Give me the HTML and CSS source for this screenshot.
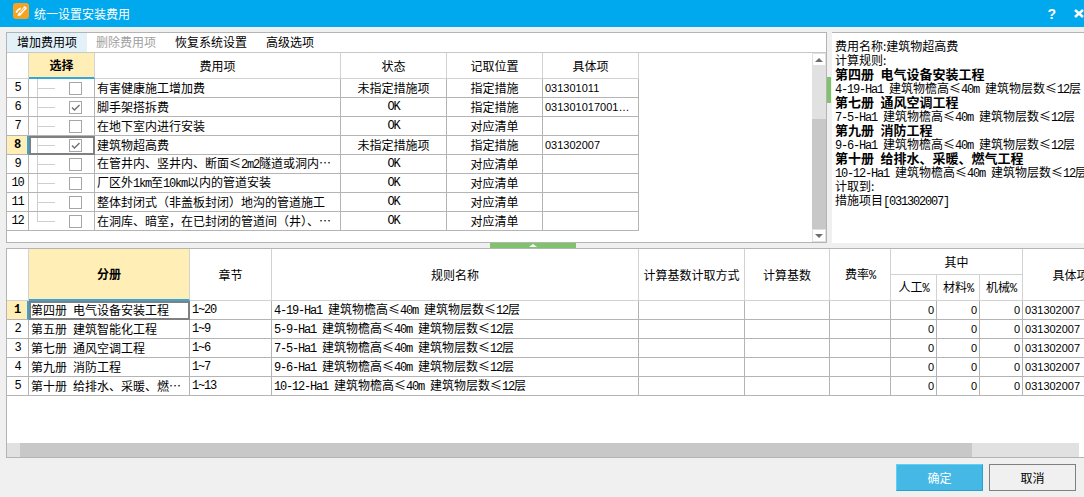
FILE: index.html
```html
<!DOCTYPE html>
<html lang="zh-CN">
<head>
  <meta charset="UTF-8">
  <title>统一设置安装费用</title>
  <link rel="stylesheet" href="styles.css">
</head>
<body>

<div class="titlebar">
  <svg class="logo" width="16" height="16" viewBox="0 0 16 16">
    <rect width="16" height="16" rx="3" fill="#f6a321"/>
    <path d="M2.5 9.5 Q4 5.5 8 4.5 L7.5 6.5 Q5 7 4 10 Z" fill="#fff"/>
    <path d="M5 11 L11.5 3 L14 5 L7.5 12.5 L4.5 13 Z" fill="#fff"/>
    <path d="M7 10 L11.5 5" stroke="#f6a321" stroke-width="1"/>
  </svg>
  <span class="title">统一设置安装费用</span>
  <span class="win-btn help">?</span>
  <svg class="win-close" width="10" height="9" viewBox="0 0 10 9"><path d="M1 1 L9 8 M9 1 L1 8" stroke="#fff" stroke-width="2.4"/></svg>
</div>

<div class="top">
  <div class="left-pane">
    <div class="toolbar">
      <span class="tool active">增加费用项</span>
      <span class="tool disabled">删除费用项</span>
      <span class="tool">恢复系统设置</span>
      <span class="tool">高级选项</span>
    </div>
    <div class="grid-area">
      <table class="grid fee-grid">
        <colgroup>
          <col class="w22"><col class="w66"><col class="w246"><col class="w106"><col class="w96"><col class="w96">
        </colgroup>
        <thead>
          <tr>
            <th></th>
            <th class="cur-col">选择</th>
            <th>费用项</th>
            <th>状态</th>
            <th>记取位置</th>
            <th>具体项</th>
          </tr>
        </thead>
        <tbody>
          <tr>
            <td class="rh">5</td>
            <td class="sel"><div class="sel-inner"><span class="tree"></span><span class="check"></span></div></td>
            <td>有害健康施工增加费</td>
            <td class="c">未指定措施项</td>
            <td class="c">指定措施</td>
            <td class="code">031301011</td>
          </tr>
          <tr>
            <td class="rh">6</td>
            <td class="sel"><div class="sel-inner"><span class="tree"></span><span class="check on"><svg width="11" height="11" viewBox="0 0 11 11"><path d="M2 5.5 L4.5 8 L9.5 3" fill="none" stroke="#6f6f7a" stroke-width="1.4"/></svg></span></div></td>
            <td>脚手架搭拆费</td>
            <td class="c m">OK</td>
            <td class="c">指定措施</td>
            <td class="code">031301017001…</td>
          </tr>
          <tr>
            <td class="rh">7</td>
            <td class="sel"><div class="sel-inner"><span class="tree"></span><span class="check"></span></div></td>
            <td>在地下室内进行安装</td>
            <td class="c m">OK</td>
            <td class="c">对应清单</td>
            <td class="code"></td>
          </tr>
          <tr>
            <td class="rh cur-row">8</td>
            <td class="sel cur-cell"><div class="sel-inner"><span class="tree"></span><span class="check on"><svg width="11" height="11" viewBox="0 0 11 11"><path d="M2 5.5 L4.5 8 L9.5 3" fill="none" stroke="#6f6f7a" stroke-width="1.4"/></svg></span></div></td>
            <td>建筑物超高费</td>
            <td class="c">未指定措施项</td>
            <td class="c">指定措施</td>
            <td class="code">031302007</td>
          </tr>
          <tr>
            <td class="rh">9</td>
            <td class="sel"><div class="sel-inner"><span class="tree"></span><span class="check"></span></div></td>
            <td>在管井内、竖井内、断面≤<span class="m">2m2</span>隧道或洞内…</td>
            <td class="c m">OK</td>
            <td class="c">对应清单</td>
            <td class="code"></td>
          </tr>
          <tr>
            <td class="rh">10</td>
            <td class="sel"><div class="sel-inner"><span class="tree"></span><span class="check"></span></div></td>
            <td>厂区外<span class="m">1km</span>至<span class="m">10km</span>以内的管道安装</td>
            <td class="c m">OK</td>
            <td class="c">对应清单</td>
            <td class="code"></td>
          </tr>
          <tr>
            <td class="rh">11</td>
            <td class="sel"><div class="sel-inner"><span class="tree"></span><span class="check"></span></div></td>
            <td>整体封闭式（非盖板封闭）地沟的管道施工</td>
            <td class="c m">OK</td>
            <td class="c">对应清单</td>
            <td class="code"></td>
          </tr>
          <tr>
            <td class="rh">12</td>
            <td class="sel"><div class="sel-inner"><span class="tree end"></span><span class="check"></span></div></td>
            <td>在洞库、暗室，在已封闭的管道间（井）、…</td>
            <td class="c m">OK</td>
            <td class="c">对应清单</td>
            <td class="code"></td>
          </tr>
        </tbody>
      </table>
      <div class="vscroll">
        <span class="sb-btn"><i class="arrow-up"></i></span>
        <div class="vtrack"><div class="vthumb"></div></div>
        <span class="sb-btn"><i class="arrow-down"></i></span>
      </div>
    </div>
  </div>
  <div class="side-handle"><span class="handle-bar"></span></div>
  <div class="info">
    <div class="line">费用名称:建筑物超高费</div>
    <div class="line">计算规则:</div>
    <div class="line b">第四册&ensp;电气设备安装工程</div>
    <div class="line"><span class="m">4-19-Ha1 </span>建筑物檐高≤<span class="m">40m </span>建筑物层数≤<span class="m">12</span>层</div>
    <div class="line b">第七册&ensp;通风空调工程</div>
    <div class="line"><span class="m">7-5-Ha1 </span>建筑物檐高≤<span class="m">40m </span>建筑物层数≤<span class="m">12</span>层</div>
    <div class="line b">第九册&ensp;消防工程</div>
    <div class="line"><span class="m">9-6-Ha1 </span>建筑物檐高≤<span class="m">40m </span>建筑物层数≤<span class="m">12</span>层</div>
    <div class="line b">第十册&ensp;给排水、采暖、燃气工程</div>
    <div class="line"><span class="m">10-12-Ha1 </span>建筑物檐高≤<span class="m">40m </span>建筑物层数≤<span class="m">12</span>层</div>
    <div class="line">计取到:</div>
    <div class="line">措施项目<span class="m">[031302007]</span></div>
  </div>
</div>

<div class="splitter"><span class="split-bar"><i class="split-arrow"></i></span></div>

<div class="bottom-pane">
  <div class="bottom-scroll">
    <table class="grid rule-grid">
      <colgroup>
        <col class="w22"><col class="w161"><col class="w82"><col class="w367"><col class="w106"><col class="w85"><col class="w61"><col class="w46"><col class="w43"><col class="w43"><col class="w96">
      </colgroup>
      <thead>
        <tr>
          <th rowspan="2"></th>
          <th rowspan="2" class="cur-col">分册</th>
          <th rowspan="2">章节</th>
          <th rowspan="2">规则名称</th>
          <th rowspan="2">计算基数计取方式</th>
          <th rowspan="2">计算基数</th>
          <th rowspan="2">费率<span class="m">%</span></th>
          <th colspan="3">其中</th>
          <th rowspan="2">具体项</th>
        </tr>
        <tr>
          <th>人工<span class="m">%</span></th>
          <th>材料<span class="m">%</span></th>
          <th>机械<span class="m">%</span></th>
        </tr>
      </thead>
      <tbody>
        <tr>
          <td class="rh cur-row">1</td>
          <td class="cur-cell">第四册&ensp;电气设备安装工程</td>
          <td class="m">1~20</td>
          <td><span class="m">4-19-Ha1 </span>建筑物檐高≤<span class="m">40m </span>建筑物层数≤<span class="m">12</span>层</td>
          <td></td><td></td><td></td>
          <td class="num">0</td><td class="num">0</td><td class="num">0</td>
          <td class="code">031302007</td>
        </tr>
        <tr>
          <td class="rh">2</td>
          <td>第五册&ensp;建筑智能化工程</td>
          <td class="m">1~9</td>
          <td><span class="m">5-9-Ha1 </span>建筑物檐高≤<span class="m">40m </span>建筑物层数≤<span class="m">12</span>层</td>
          <td></td><td></td><td></td>
          <td class="num">0</td><td class="num">0</td><td class="num">0</td>
          <td class="code">031302007</td>
        </tr>
        <tr>
          <td class="rh">3</td>
          <td>第七册&ensp;通风空调工程</td>
          <td class="m">1~6</td>
          <td><span class="m">7-5-Ha1 </span>建筑物檐高≤<span class="m">40m </span>建筑物层数≤<span class="m">12</span>层</td>
          <td></td><td></td><td></td>
          <td class="num">0</td><td class="num">0</td><td class="num">0</td>
          <td class="code">031302007</td>
        </tr>
        <tr>
          <td class="rh">4</td>
          <td>第九册&ensp;消防工程</td>
          <td class="m">1~7</td>
          <td><span class="m">9-6-Ha1 </span>建筑物檐高≤<span class="m">40m </span>建筑物层数≤<span class="m">12</span>层</td>
          <td></td><td></td><td></td>
          <td class="num">0</td><td class="num">0</td><td class="num">0</td>
          <td class="code">031302007</td>
        </tr>
        <tr>
          <td class="rh">5</td>
          <td>第十册&ensp;给排水、采暖、燃…</td>
          <td class="m">1~13</td>
          <td><span class="m">10-12-Ha1 </span>建筑物檐高≤<span class="m">40m </span>建筑物层数≤<span class="m">12</span>层</td>
          <td></td><td></td><td></td>
          <td class="num">0</td><td class="num">0</td><td class="num">0</td>
          <td class="code">031302007</td>
        </tr>
      </tbody>
    </table>
  </div>
  <div class="hscroll">
    <span class="sb-btn-h"></span>
    <div class="hthumb"></div>
    <span class="sb-btn-h"></span>
  </div>
</div>

<div class="footer">
  <button class="btn primary">确定</button>
  <button class="btn">取消</button>
</div>

</body>
</html>
```

FILE: styles.css
```css
html, body {
  height: 100%;
}
body {
  margin: 0;
  width: 1084px;
  height: 497px;
  overflow: hidden;
  background: #f0f0f0;
  color: #000;
  font-family: "Noto Sans CJK SC", "Liberation Sans", sans-serif;
  font-size: 12px;
  line-height: 14px;
}

/* title bar */
.titlebar {
  display: flex;
  align-items: center;
  height: 27px;
  background: #00a9ee;
  color: #fff;
}
.logo {
  margin: -5px 5px 0 13px;
}
.title {
  flex: 1;
}
.help {
  font-family: "Liberation Sans", sans-serif;
  font-size: 14px;
  font-weight: bold;
  margin-right: 18px;
}
.win-close {
  margin-right: 0;
}

/* upper part */
.top {
  display: flex;
  height: 211px;
  margin-top: 5px;
  padding-left: 6px;
}
.left-pane {
  display: flex;
  flex-direction: column;
  box-sizing: border-box;
  width: 821px;
  background: #fff;
  border: 1px solid #b4b4b4;
}
.toolbar {
  display: flex;
  height: 20px;
  flex: none;
  align-items: stretch;
  border-bottom: 1px solid #c8c8c8;
  box-sizing: border-box;
}
.tool {
  padding: 2px 10px 0;
  margin-right: -1px;
}
.tool.active {
  background: #e3f1f8;
}
.tool.disabled {
  color: #a0a0a0;
}
.grid-area {
  display: flex;
  flex: 1;
  min-height: 0;
}
.side-handle {
  width: 5px;
  padding-top: 45px;
  box-sizing: border-box;
}
.handle-bar {
  display: block;
  width: 4px;
  height: 26px;
  background: #7fc36d;
}
.info {
  flex: 1;
  box-sizing: border-box;
  padding: 6px 0 0 3px;
  background: #fff;
  border-top: 1px solid #b4b4b4;
  white-space: nowrap;
  overflow: hidden;
}
.line {
  height: 14px;
}
.b {
  font-size: 13px;
  font-weight: bold;
}

/* grids */
.grid {
  table-layout: fixed;
  border-collapse: separate;
  border-spacing: 0;
  flex: none;
}
.fee-grid {
  width: 632px;
  margin-right: 173px;
  align-self: flex-start;
}
.rule-grid {
  width: 1112px;
}
.w22 { width: 22px; }
.w43 { width: 43px; }
.w46 { width: 46px; }
.w61 { width: 61px; }
.w66 { width: 66px; }
.w82 { width: 82px; }
.w85 { width: 85px; }
.w96 { width: 96px; }
.w106 { width: 106px; }
.w161 { width: 161px; }
.w246 { width: 246px; }
.w367 { width: 367px; }
.grid th {
  box-sizing: border-box;
  padding: 0;
  font-weight: normal;
  text-align: center;
  border-right: 1px solid #d2d2d2;
  border-bottom: 1px solid #d2d2d2;
}
.fee-grid th {
  height: 26px;
}
.rule-grid thead tr {
  height: 26px;
}
.grid th.cur-col {
  background: #ffeeb5;
  font-weight: bold;
  border-bottom: 2px solid #36a5d8;
}
.grid td {
  box-sizing: border-box;
  height: 19px;
  padding: 0 2px;
  border-right: 1px solid #b4b4b4;
  border-bottom: 1px solid #b4b4b4;
  white-space: nowrap;
  overflow: hidden;
}
.grid td.rh {
  padding: 0;
  text-align: center;
  font-family: "Liberation Mono", monospace;
  letter-spacing: -1.2px;
}
.grid td.cur-row {
  background: #ffeeb5;
  font-weight: bold;
  border-right: 2px solid #36a5d8;
}
.grid td.cur-cell {
  outline: 2px solid #808080;
  outline-offset: -2px;
}
.grid td.sel {
  padding: 0;
}
.grid td.c {
  text-align: center;
}
.grid td.num {
  text-align: right;
  font-family: "Liberation Sans", sans-serif;
  font-size: 11px;
}
.grid td.code {
  font-family: "Liberation Sans", "Noto Sans CJK SC", sans-serif;
  font-size: 11px;
}
/* latin text in the old dialog font is 6px wide */
.m {
  font-family: "Liberation Mono", monospace;
  letter-spacing: -1.2px;
}

/* tree lines and checkboxes */
.sel-inner {
  display: flex;
  align-items: center;
  height: 18px;
}
.tree {
  align-self: flex-start;
  box-sizing: border-box;
  width: 18px;
  height: 18px;
  margin: 0 14px 0 8px;
  border-left: 1px solid #cfcfcf;
  background: linear-gradient(#cfcfcf, #cfcfcf) no-repeat 0 9px / 17px 1px;
}
.tree.end {
  height: 10px;
}
.check {
  display: block;
  box-sizing: border-box;
  width: 13px;
  height: 13px;
  background: #fff;
  border: 1px solid #a6a6a6;
}
.check svg {
  display: block;
}

/* scrollbars */
.vscroll {
  display: flex;
  flex-direction: column;
  width: 14px;
  flex: none;
  background: #e1e1e1;
}
.sb-btn {
  display: flex;
  align-items: center;
  justify-content: center;
  height: 13px;
  flex: none;
  background: #fff;
  border: 1px solid #e1e1e1;
  box-sizing: border-box;
}
.arrow-up {
  border: 4px solid transparent;
  border-top: 0;
  border-bottom: 4px solid #6e6e6e;
}
.arrow-down {
  border: 4px solid transparent;
  border-bottom: 0;
  border-top: 4px solid #6e6e6e;
}
.vtrack {
  flex: 1;
  display: flex;
  padding-top: 53px;
}
.vthumb {
  flex: 1;
  background: #c8c8c8;
}
.splitter {
  height: 5px;
  background: #f0f0f0;
}
.split-bar {
  display: flex;
  justify-content: center;
  align-items: center;
  width: 86px;
  height: 5px;
  margin-left: 490px;
  background: #7fc36d;
}
.split-arrow {
  border: 4px solid transparent;
  border-top: 0;
  border-bottom: 3px solid #fff;
}

/* lower part */
.bottom-pane {
  display: flex;
  flex-direction: column;
  box-sizing: border-box;
  height: 210px;
  margin-left: 6px;
  background: #fff;
  border-top: 1px solid #b4b4b4;
  border-left: 1px solid #b4b4b4;
  border-bottom: 1px solid #b4b4b4;
}
.bottom-scroll {
  flex: 1;
  min-height: 0;
  overflow: hidden;
}
.hscroll {
  display: flex;
  height: 14px;
  flex: none;
  background: #e1e1e1;
}
.sb-btn-h {
  width: 13px;
  flex: none;
}
.sb-btn-h:first-child {
  background: #e1e1e1;
}
.sb-btn-h:last-child {
  width: 5px;
  margin-left: auto;
  background: #fff;
}
.hthumb {
  width: 952px;
  background: #c8c8c8;
}

/* buttons */
.footer {
  display: flex;
  justify-content: flex-end;
  gap: 6px;
  padding: 6px 8px 0 0;
}
.btn {
  box-sizing: border-box;
  width: 87px;
  height: 27px;
  padding: 0;
  background: #f0f0f0;
  border: 1px solid #808080;
  font: inherit;
  color: #000;
}
.btn.primary {
  background: #45b8e6;
  border-color: #5fd0f5 #2aa0d0 #2aa0d0 #5fd0f5;
  color: #fff;
}
```
